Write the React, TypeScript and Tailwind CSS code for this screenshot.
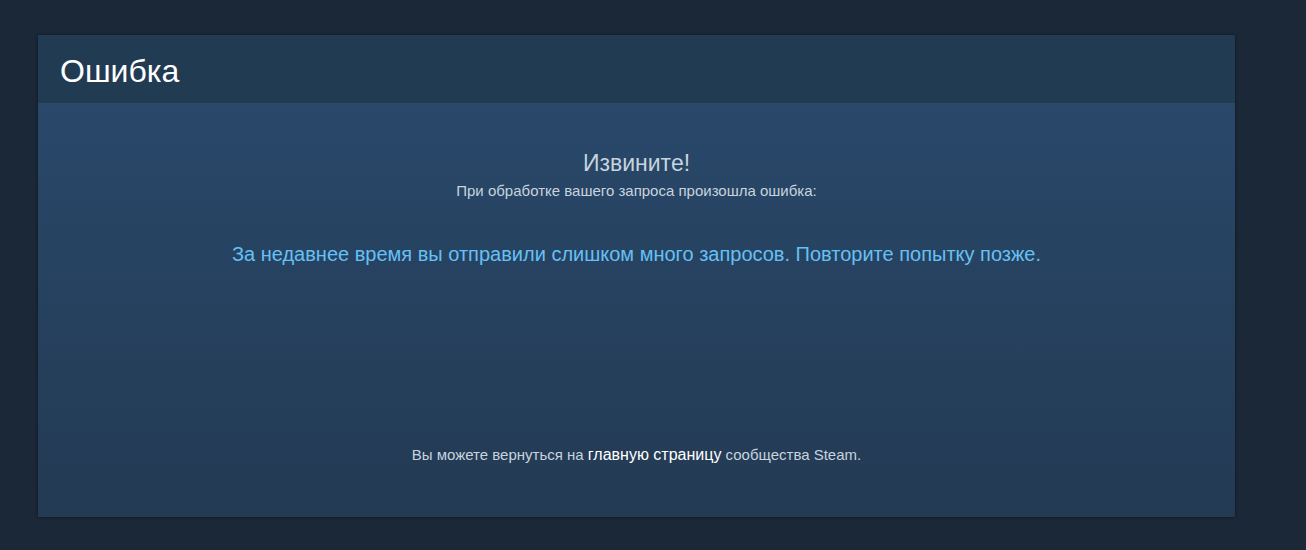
export default function App() {
  return (
    <div className="min-h-[550px] w-full bg-[#1b2838] pt-[35px] [font-family:'Liberation_Sans',Arial,sans-serif]">
      <div className="ml-[38px] w-[1197px] shadow-[0_0_3px_rgba(0,0,0,0.5)]">
        <div className="flex h-[68px] items-center bg-[#213b53] pl-[22px]">
          <h2 className="mt-[4px] text-[32px] font-normal leading-none text-white">Ошибка</h2>
        </div>
        <div className="flex h-[414px] flex-col items-center bg-gradient-to-b from-[#29486a] to-[#233a53] pt-[45px] pb-[52px]">
          <h3 className="text-[23px] leading-[30px] text-[#c6d4df]">Извините!</h3>
          <p className="mt-[3px] text-[15px] leading-[20px] text-[#c6d4df]">
            При обработке вашего запроса произошла ошибка:
          </p>
          <p className="mt-[41px] text-[20px] leading-[24px] text-[#66c0f4]">
            За недавнее время вы отправили слишком много запросов. Повторите попытку позже.
          </p>
          <p className="mt-auto text-[15px] leading-[20px] text-[#c6d4df]">
            Вы можете вернуться на{" "}
            <a href="#" className="text-[16px] text-white">
              главную страницу
            </a>{" "}
            сообщества Steam.
          </p>
        </div>
      </div>
    </div>
  );
}
